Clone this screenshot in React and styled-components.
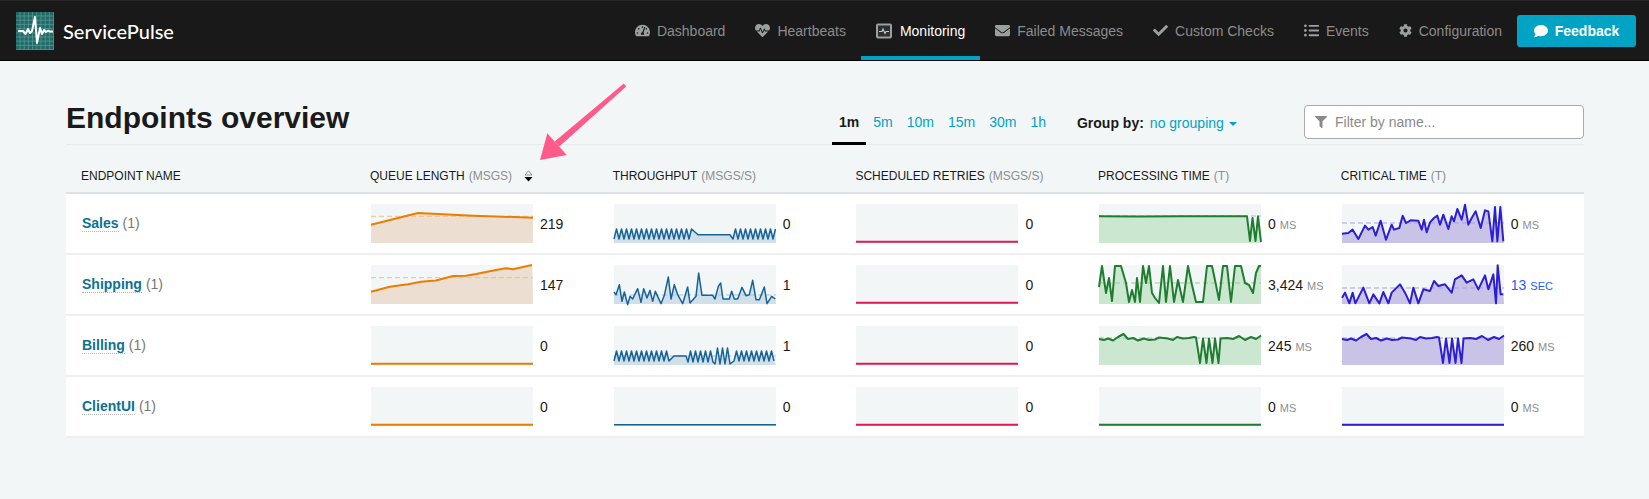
import React from 'react'
import styled, { createGlobalStyle } from 'styled-components'
import {
  FaTachometerAlt,
  FaHeartbeat,
  FaEnvelope,
  FaCheck,
  FaListUl,
  FaCog,
  FaComment,
  FaFilter,
} from 'react-icons/fa'

const GlobalStyle = createGlobalStyle`
  body {
    margin: 0;
    background: #f2f6f7;
    font-family: "Liberation Sans", Arial, sans-serif;
    color: #1a1a1a;
  }
`

const Navbar = styled.div`
  display: flex;
  align-items: stretch;
  height: 61px;
  padding: 0 13px 0 16px;
  background: #191919;
  border-top: 1px solid #262626;
  border-bottom: 1px solid #000;
  box-sizing: border-box;
`
const Brand = styled.div`
  display: flex;
  align-items: center;
  gap: 9px;
  font-family: Lato, sans-serif;
  font-size: 20px;
  font-weight: 500;
  color: #fff;
`
const NavItems = styled.div`
  display: flex;
  align-items: stretch;
  margin-left: auto;
`
const NavItem = styled.div`
  display: flex;
  align-items: center;
  gap: ${p => (p.$wide ? '8px' : '7px')};
  padding: 0 15px;
  font-size: 14px;
  color: ${p => (p.$active ? '#fff' : '#8c8c8c')};
  box-shadow: ${p => (p.$active ? 'inset 0 -4px 0 #00a3c4' : 'none')};
  svg {
    width: ${p => p.$iconSize || 15}px;
    height: ${p => p.$iconSize || 15}px;
    color: #9a9f9f;
  }
`
const FeedbackButton = styled.button`
  display: flex;
  align-items: center;
  gap: 7px;
  align-self: center;
  height: 32px;
  width: 119px;
  justify-content: center;
  border: 0;
  border-radius: 3px;
  background: #00a3c4;
  color: #fff;
  font-family: inherit;
  font-size: 14px;
  font-weight: bold;
`
const Page = styled.div`
  padding: 0 65px 0 66px;
`
const Toolbar = styled.div`
  display: flex;
  align-items: flex-end;
  height: 83px;
`
const Title = styled.h1`
  flex: none;
  width: 766px;
  margin: 0 0 9px;
  font-size: 30px;
  font-weight: bold;
  color: #1a1a1a;
`
const Tabs = styled.div`
  display: flex;
  flex: none;
  margin-bottom: -1px;
`
const Tab = styled.div`
  padding: 0 7px 12px;
  font-size: 14px;
  line-height: 16px;
  color: ${p => (p.$active ? '#1a1a1a' : '#00a3c4')};
  font-weight: ${p => (p.$active ? 'bold' : 'normal')};
  border-bottom: 3px solid ${p => (p.$active ? '#000' : 'transparent')};
`
const GroupBy = styled.div`
  display: flex;
  flex: none;
  gap: 6px;
  width: 227px;
  margin: 0 0 13px 24px;
  font-size: 14px;
  line-height: 16px;
  b {
    color: #1a1a1a;
  }
`
const GroupLink = styled.span`
  color: #00a3c4;
  &::after {
    content: '';
    display: inline-block;
    margin-left: 5px;
    vertical-align: middle;
    border: 4px solid transparent;
    border-top-color: #00a3c4;
    border-bottom: 0;
  }
`
const FilterBox = styled.div`
  display: flex;
  flex: none;
  align-items: center;
  gap: 8px;
  width: 280px;
  height: 34px;
  margin-bottom: 5px;
  padding-left: 10px;
  box-sizing: border-box;
  background: #fff;
  border: 1px solid #aaa;
  border-radius: 4px;
  font-size: 14px;
  color: #8a8a8a;
  svg {
    color: #8a8a8a;
    width: 12px;
    height: 12px;
  }
`
const Table = styled.div`
  border-top: 1px solid #e6ebec;
`
const HeaderRow = styled.div`
  display: grid;
  grid-template-columns: 303px repeat(5, 242.7px);
  align-items: center;
  height: 32px;
  padding-top: 15px;
  border-bottom: 2px solid #dde3e4;
`
const HeaderCell = styled.div`
  display: flex;
  align-items: center;
  padding-left: ${p => (p.$first ? '15px' : '1px')};
  font-size: 12px;
  color: #1a1a1a;
  white-space: nowrap;
  span {
    margin-left: 4px;
    color: #8b8f90;
  }
  svg {
    margin-left: 12px;
  }
`
const Row = styled.div`
  display: grid;
  grid-template-columns: 303px repeat(5, 242.7px);
  align-items: center;
  height: 61px;
  box-sizing: border-box;
  background: #fff;
  border-bottom: 2px solid #eeefef;
`
const NameCell = styled.div`
  padding: 0 0 1px 16px;
  font-size: 14px;
  color: #777;
`
const EndpointLink = styled.span`
  color: #0d7196;
  font-weight: bold;
  border-bottom: 1px dotted #b5b5b5;
  margin-right: 4px;
`
const MetricCell = styled.div`
  display: flex;
  align-items: center;
  padding-left: 2px;
`
const Graph = styled.svg`
  display: block;
  width: 162px;
  height: 39px;
  overflow: visible;
  background: #f2f6f7;
  flex: none;
`
const Value = styled.div`
  margin-left: 7px;
  font-size: 14px;
  color: ${p => (p.$warn ? '#1f5cff' : '#1a1a1a')};
  white-space: nowrap;
`
const Unit = styled.span`
  margin-left: 4px;
  font-size: 11px;
  color: ${p => (p.$warn ? '#1f5cff' : '#8b8f90')};
`
const Arrow = styled.svg`
  position: absolute;
  left: 530px;
  top: 78px;
  width: 105px;
  height: 88px;
`

const COLORS = {
  queue: { line: '#ea7e00', fill: '#ecdfd2', avg: '#f5bd80', width: 2 },
  throughput: { line: '#176397', fill: '#d1dfe9', avg: '#a9c4d6', width: 1.5 },
  retries: { line: '#e01a59', fill: '#f5d5df', avg: '#f0a0b8', width: 2 },
  processing: { line: '#1f7d30', fill: '#cbe7cf', avg: '#9cc8a3', width: 2 },
  critical: { line: '#2d1fd0', fill: '#cac3e8', avg: '#a79fe6', width: 2 },
}

// zigzag between two heights, for the busy stretches of the throughput graphs
function zigzag(from, to, top, bottom, step = 2.5) {
  const points = []
  let up = false
  for (let x = from; x <= to; x += step) {
    points.push([x, up ? top : bottom])
    up = !up
  }
  return points
}

// traced at 3x with the graph's top left corner at x0, y0
const traced = (x0, y0, points) => points.map(([x, y]) => [(x - x0) / 3, (y - y0) / 3])

const FLAT = [[0, 37.8], [162, 37.8]]

const billingTail = [[97, 11.5], [101, 37], [104, 12.5], [107.5, 37], [110, 12.5], [113.5, 37], [116, 12.5], [119.5, 37], [121.5, 12.5], [128, 12], [134, 13], [140, 10], [146, 14], [152, 11], [157, 13], [162, 9.5]]
const billingHead = [[0, 13], [5, 14], [9, 12.5], [14, 14.5], [19, 11], [24.5, 8], [29, 13], [34, 12], [39, 14.5], [45, 12.5], [50, 14], [56, 13.5], [60, 11.5], [69, 12.5], [74, 14], [78, 11], [84, 12.5], [90, 12], [95, 11]]

const ENDPOINTS = [
  {
    name: 'Sales',
    queue: { points: [[0, 20.7], [47, 9], [102, 11.7], [162, 13.7]], avg: 12.3, value: '219' },
    throughput: {
      points: [...zigzag(0, 79, 25, 35), [84, 30.7], [116, 30.7], ...zigzag(119, 162, 25, 35)],
      value: '0',
    },
    retries: { points: FLAT, value: '0' },
    processing: {
      points: [[0, 12.3], [40, 12.6], [80, 12.3], [148, 12.3], [151, 37], [153.5, 14], [156.5, 37], [159, 12.3], [162, 38]],
      avg: 12,
      value: '0',
      unit: 'MS',
    },
    critical: {
      points: traced(936, 163, [[936, 252], [955, 250], [968, 240], [985, 268], [1005, 228], [1015, 240], [1028, 232], [1037, 258], [1052, 213], [1068, 270], [1085, 225], [1092, 240], [1108, 235], [1118, 198], [1128, 220], [1142, 212], [1165, 213], [1175, 240], [1182, 210], [1190, 248], [1200, 218], [1212, 205], [1222, 198], [1230, 225], [1240, 195], [1255, 238], [1265, 200], [1272, 215], [1282, 178], [1295, 210], [1305, 165], [1315, 225], [1325, 205], [1337, 185], [1352, 235], [1365, 182], [1375, 185], [1387, 275], [1395, 172], [1402, 275], [1411, 172], [1420, 275]]),
      avg: 19,
      value: '0',
      unit: 'MS',
    },
  },
  {
    name: 'Shipping',
    queue: {
      points: [[0, 26.7], [18.7, 21.7], [37, 19.3], [50, 16.7], [65, 15.5], [82, 11], [95, 10.7], [105, 9], [125, 5], [135, 3.3], [142, 4.3], [161, 0]],
      avg: 12.7,
      value: '147',
    },
    throughput: {
      points: traced(134, 76, [[134, 157], [140, 165], [150, 135], [158, 185], [165, 157], [175, 195], [182, 170], [190, 178], [205, 147], [215, 188], [223, 147], [233, 175], [242, 152], [250, 185], [258, 155], [275, 192], [285, 167], [297, 112], [305, 178], [315, 135], [325, 165], [340, 192], [355, 142], [362, 190], [380, 170], [388, 100], [398, 167], [430, 167], [437, 178], [447, 140], [454, 130], [461, 178], [480, 178], [487, 155], [495, 178], [505, 178], [518, 143], [530, 168], [540, 165], [550, 122], [560, 180], [570, 180], [585, 142], [593, 192], [607, 170], [618, 178]]),
      avg: 30,
      value: '1',
    },
    retries: { points: FLAT, value: '0' },
    processing: {
      points: [[0, 22], [3, 1], [7, 28], [10, 13], [13, 36], [16, 1], [22, 1], [27, 18], [30, 37], [33, 25], [36, 37], [38, 13], [41, 37], [44, 1], [47, 18], [50, 1], [53, 28], [56, 33], [60, 38], [64, 1], [67, 37], [71, 1], [75, 37], [79, 15], [84, 37], [89, 1], [93, 20], [97, 37], [104, 37], [108, 1], [113, 1], [117, 20], [120, 35], [124, 1], [128, 1], [132, 37], [136, 1], [142, 1], [146, 18], [150, 20], [154, 28], [157, 8], [160, 1], [162, 1]],
      avg: 18,
      value: '3,424',
      unit: 'MS',
    },
    critical: {
      points: traced(936, 347, [[936, 445], [945, 430], [958, 462], [968, 430], [976, 462], [1000, 415], [1018, 462], [1030, 435], [1048, 462], [1060, 428], [1075, 462], [1085, 430], [1110, 405], [1125, 430], [1140, 462], [1150, 415], [1165, 462], [1180, 420], [1200, 425], [1212, 395], [1225, 410], [1245, 405], [1265, 430], [1275, 390], [1295, 378], [1310, 400], [1330, 390], [1345, 420], [1365, 378], [1375, 420], [1390, 375], [1398, 462], [1403, 348], [1412, 435], [1420, 435]]),
      avg: 23,
      value: '13',
      unit: 'SEC',
      warn: true,
    },
  },
  {
    name: 'Billing',
    queue: { points: FLAT, value: '0' },
    throughput: {
      points: [...zigzag(0, 55, 25, 35), [57, 33], [60, 30], [72, 30], ...zigzag(74, 100, 25, 36), ...zigzag(101, 118, 22, 38), ...zigzag(120, 162, 25, 35)],
      avg: 30,
      value: '1',
    },
    retries: { points: FLAT, value: '0' },
    processing: { points: [...billingHead, ...billingTail], avg: 12, value: '245', unit: 'MS' },
    critical: { points: [...billingHead, ...billingTail], avg: 12, value: '260', unit: 'MS' },
  },
  {
    name: 'ClientUI',
    queue: { points: FLAT, value: '0' },
    throughput: { points: FLAT, value: '0' },
    retries: { points: FLAT, value: '0' },
    processing: { points: FLAT, value: '0', unit: 'MS' },
    critical: { points: FLAT, value: '0', unit: 'MS' },
  },
]

const COLUMNS = ['queue', 'throughput', 'retries', 'processing', 'critical']

function LogoIcon() {
  const lines = []
  for (let i = 4; i < 38; i += 4.2) {
    lines.push(<path key={i} d={`M${i} 0V38M0 ${i}H38`} stroke="#5a9c98" strokeWidth="0.7" />)
  }
  return (
    <svg width="38" height="38" viewBox="0 0 38 38">
      <rect width="38" height="38" fill="#226a68" />
      {lines}
      <path
        d="M2 19H7L9.5 22L12 17L14 21L16 19L19 5L21 31L24 16L26 22L28 18L30 20L32 18.5L33.5 19.5H37"
        fill="none"
        stroke="#fff"
        strokeWidth="2"
        strokeLinejoin="round"
      />
    </svg>
  )
}

function MonitorIcon() {
  return (
    <svg viewBox="0 0 16 16">
      <rect x="1" y="1.5" width="14" height="13" rx="1" fill="#2c2f2f" stroke="currentColor" strokeWidth="2" />
      <path d="M3 8.5H6L7 6L9 10.5L10 8.5H13" fill="none" stroke="#c4c8c8" strokeWidth="1.1" />
    </svg>
  )
}

function SortIcon() {
  return (
    <svg width="9" height="12" viewBox="0 0 9 12">
      <path d="M4.5 0.8L8 5H1Z" fill="#f2f6f7" stroke="#8a8a8a" strokeWidth="0.9" />
      <path d="M0.5 7H8.5L4.5 11.5Z" fill="#000" />
    </svg>
  )
}

function Spark({ kind, points, avg }) {
  const color = COLORS[kind]
  const line = points.map(p => p.join(',')).join(' ')
  const area = `0,39 ${line} 162,39`
  return (
    <Graph viewBox="0 0 162 39">
      <polygon points={area} fill={color.fill} />
      {avg !== undefined && (
        <line x1="0" x2="162" y1={avg} y2={avg} stroke={color.avg} strokeDasharray="5 3" />
      )}
      <polyline points={line} fill="none" stroke={color.line} strokeWidth={color.width} strokeLinejoin="round" />
    </Graph>
  )
}

const NAV = [
  { label: 'Dashboard', icon: <FaTachometerAlt /> },
  { label: 'Heartbeats', icon: <FaHeartbeat /> },
  { label: 'Monitoring', icon: <MonitorIcon />, active: true, iconSize: 16, wide: true },
  { label: 'Failed Messages', icon: <FaEnvelope /> },
  { label: 'Custom Checks', icon: <FaCheck /> },
  { label: 'Events', icon: <FaListUl /> },
  { label: 'Configuration', icon: <FaCog />, iconSize: 13 },
]

function App() {
  return (
    <>
      <GlobalStyle />
      <Navbar>
        <Brand>
          <LogoIcon />
          ServicePulse
        </Brand>
        <NavItems>
          {NAV.map(item => (
            <NavItem key={item.label} $active={item.active} $iconSize={item.iconSize} $wide={item.wide}>
              {item.icon}
              {item.label}
            </NavItem>
          ))}
        </NavItems>
        <FeedbackButton>
          <FaComment />
          Feedback
        </FeedbackButton>
      </Navbar>
      <Page>
        <Toolbar>
          <Title>Endpoints overview</Title>
          <Tabs>
            {['1m', '5m', '10m', '15m', '30m', '1h'].map((t, i) => (
              <Tab key={t} $active={i === 0}>{t}</Tab>
            ))}
          </Tabs>
          <GroupBy>
            <b>Group by:</b>
            <GroupLink>no grouping</GroupLink>
          </GroupBy>
          <FilterBox>
            <FaFilter />
            Filter by name...
          </FilterBox>
        </Toolbar>
        <Table>
          <HeaderRow>
            <HeaderCell $first>ENDPOINT NAME</HeaderCell>
            <HeaderCell>QUEUE LENGTH <span>(MSGS)</span><SortIcon /></HeaderCell>
            <HeaderCell>THROUGHPUT <span>(MSGS/S)</span></HeaderCell>
            <HeaderCell>SCHEDULED RETRIES <span>(MSGS/S)</span></HeaderCell>
            <HeaderCell>PROCESSING TIME <span>(T)</span></HeaderCell>
            <HeaderCell>CRITICAL TIME <span>(T)</span></HeaderCell>
          </HeaderRow>
          {ENDPOINTS.map(ep => (
            <Row key={ep.name}>
              <NameCell>
                <EndpointLink>{ep.name}</EndpointLink>(1)
              </NameCell>
              {COLUMNS.map(kind => (
                <MetricCell key={kind}>
                  <Spark kind={kind} points={ep[kind].points} avg={ep[kind].avg} />
                  <Value $warn={ep[kind].warn}>
                    {ep[kind].value}
                    {ep[kind].unit && <Unit $warn={ep[kind].warn}>{ep[kind].unit}</Unit>}
                  </Value>
                </MetricCell>
              ))}
            </Row>
          ))}
        </Table>
      </Page>
      <Arrow viewBox="0 0 105 88">
        <polygon points="29.3,68.6 24.7,63.4 93.8,5.6 96.2,8.4" fill="#ff5a8a" />
        <polygon points="10,82 17.3,55.3 36.7,77" fill="#ff5a8a" />
      </Arrow>
    </>
  )
}

export default App
